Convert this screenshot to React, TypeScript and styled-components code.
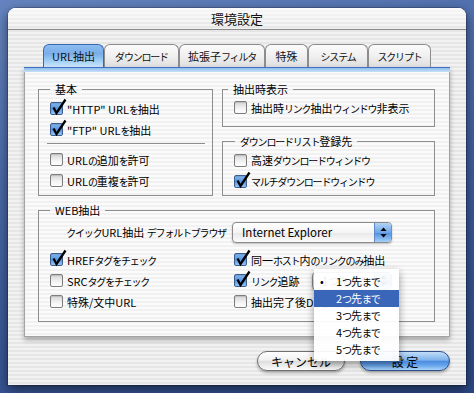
import React from "react";
import styled, { createGlobalStyle } from "styled-components";

const GlobalStyle = createGlobalStyle`
  html, body { margin: 0; padding: 0; }
  body {
    width: 474px;
    height: 393px;
    overflow: hidden;
    background: linear-gradient(165deg, #6584bf 0%, #4a69a7 35%, #3a5897 65%, #2b4884 100%);
    font-family: "Noto Sans CJK JP", sans-serif;
    font-size: 11px;
    color: #000;
  }
`;

const Desktop = styled.div`
  padding: 8px 0 0 8px;
`;

const Window = styled.div`
  width: 458px;
  height: 377px;
  border-radius: 8px 8px 0 0;
  background: repeating-linear-gradient(180deg, #f2f2f2 0 2px, #e6e6e6 2px 4px);
  box-shadow: 0 4px 12px rgba(0, 0, 0, 0.55), 0 0 0 1px rgba(0, 0, 0, 0.2);
  display: flex;
  flex-direction: column;
`;

const TitleBar = styled.div`
  height: 21px;
  border-radius: 8px 8px 0 0;
  border-bottom: 1px solid #8a8a8a;
  background: linear-gradient(rgba(255, 255, 255, 0.75), rgba(255, 255, 255, 0.15)),
    repeating-linear-gradient(180deg, #f0f0f0 0 2px, #e1e1e1 2px 4px);
  text-align: center;
  font-size: 13px;
  line-height: 21px;
  color: #111;
`;

const Body = styled.div`
  padding: 14px 16px 0;
  display: flex;
  flex-direction: column;
`;

const TabRow = styled.div`
  display: flex;
  justify-content: center;
  height: 23px;
`;

const Tab = styled.div<{ $w: number; $on?: boolean }>`
  width: ${(p) => p.$w}px;
  height: 23px;
  box-sizing: border-box;
  border: 1px solid ${(p) => (p.$on ? "#3a68b0" : "#8c8c8c")};
  border-bottom: none;
  border-radius: 6px 6px 0 0;
  background: ${(p) =>
    p.$on
      ? "linear-gradient(#8dbcef 0%, #78ade9 40%, #9ccbf4 70%, #cfe7fd 100%)"
      : "linear-gradient(#fbfbfb 0%, #f0f0f0 50%, #dedede 100%)"};
  display: flex;
  align-items: center;
  justify-content: center;
  font-size: 11px;
  color: #111;
`;

const Panel = styled.div`
  height: 270px;
  box-sizing: border-box;
  border: 1px solid #a2a2a2;
  border-top: none;
  background: repeating-linear-gradient(180deg, #fbfbfb 0 2px, #f1f1f1 2px 4px);
  box-shadow: 0 3px 5px rgba(0, 0, 0, 0.3);
  display: flex;
  flex-direction: column;
`;

const Strip = styled.div`
  height: 5px;
  margin: 0 -1px;
  background: linear-gradient(#3f72c0 0 1px, #8fbcec 1px, #c8e1f9 100%);
`;

const Content = styled.div`
  padding: 11px 0 0 13px;
  display: grid;
  grid-template-columns: 175px 213px;
  column-gap: 9px;
  row-gap: 8px;
  align-items: start;
`;

const Group = styled.fieldset<{ $span?: boolean; $rows?: string; $pad: string }>`
  margin: 0;
  min-width: 0;
  border: 1px solid #8e8e8e;
  padding: ${(p) => p.$pad};
  grid-column: ${(p) => (p.$span ? "1 / 3" : "auto")};
  grid-row: ${(p) => p.$rows ?? "auto"};
  align-self: stretch;
`;

const Legend = styled.legend<{ $offset: number }>`
  margin-left: ${(p) => p.$offset}px;
  padding: 0 5px;
  font-size: 11px;
  line-height: 13px;
`;

const Kana = styled.span`
  font-size: 10px;
  letter-spacing: -1.2px;
`;

const Row = styled.div`
  display: flex;
  align-items: center;
  height: 21px;
  gap: 4px;
  white-space: nowrap;
  min-width: 0;
`;

const Box = styled.span<{ $on: boolean }>`
  position: relative;
  flex: none;
  width: 13px;
  height: 13px;
  box-sizing: border-box;
  border: 1px solid ${(p) => (p.$on ? "#3d5d8f" : "#7d7d7d")};
  border-radius: 2px;
  background: ${(p) =>
    p.$on
      ? "linear-gradient(#86b8ee, #5594e0 50%, #94c6f5 100%)"
      : "linear-gradient(#d4d4d4, #f2f2f2 55%, #ffffff)"};
  box-shadow: inset 0 1px 1px rgba(0, 0, 0, 0.12), 0 1px 0 rgba(255, 255, 255, 0.6);
`;

const Tick = styled.svg`
  position: absolute;
  left: -1px;
  top: -5px;
  width: 17px;
  height: 17px;
  overflow: visible;
`;

const Separator = styled.div`
  height: 1px;
  width: 158px;
  margin: 3px 0 5px -3px;
  background: #8e8e8e;
  box-shadow: 0 1px 0 #fff;
`;

const QuickRow = styled.div`
  display: flex;
  justify-content: flex-end;
  align-items: center;
  gap: 6px;
  height: 24px;
  margin-bottom: 5px;
  white-space: nowrap;
`;

const WebGrid = styled.div`
  display: grid;
  grid-template-columns: 184px minmax(0, 1fr);
`;

const Popup = styled.div<{ $w: number; $h: number }>`
  position: relative;
  flex: none;
  display: flex;
  width: ${(p) => p.$w}px;
  height: ${(p) => p.$h}px;
  box-sizing: border-box;
  border: 1px solid #8a8a8a;
  border-radius: 4px;
  background: linear-gradient(#ffffff, #f4f4f4 50%, #e8e8e8 52%, #fbfbfb);
  box-shadow: 0 1px 2px rgba(0, 0, 0, 0.25);
`;

const PopupPush = styled(Popup)`
  margin-left: auto;
`;

const PopupText = styled.span`
  flex: 1;
  display: flex;
  align-items: center;
  padding-left: 9px;
  font-size: 11.5px;
  white-space: nowrap;
`;

const PopupArrow = styled.span`
  width: 16px;
  flex: none;
  border-left: 1px solid #5f88c4;
  border-radius: 0 3px 3px 0;
  background: linear-gradient(#b2d4f6, #6ea6e8 50%, #4f8fe0 52%, #a6d0f8);
  display: flex;
  align-items: center;
  justify-content: center;
`;

const Menu = styled.div`
  position: absolute;
  left: 1px;
  top: -4px;
  width: 85px;
  padding: 4px 0 3px;
  background: rgba(255, 255, 255, 0.93);
  box-shadow: 0 3px 8px rgba(0, 0, 0, 0.4);
  z-index: 5;
`;

const MenuItem = styled.div<{ $hl?: boolean }>`
  position: relative;
  height: 17px;
  line-height: 17px;
  padding-left: 22px;
  font-size: 11px;
  background: ${(p) => (p.$hl ? "#3a66ba" : "transparent")};
  color: ${(p) => (p.$hl ? "#fff" : "#000")};
`;

const Bullet = styled.span`
  position: absolute;
  left: 6px;
  top: 0;
`;

const ButtonRow = styled.div`
  display: flex;
  justify-content: flex-end;
  gap: 15px;
  margin-top: 14px;
`;

const Button = styled.div<{ $w: number; $default?: boolean }>`
  width: ${(p) => p.$w}px;
  height: 20px;
  box-sizing: border-box;
  border-radius: 10px;
  border: 1px solid ${(p) => (p.$default ? "#2d4f88" : "#707070")};
  background: ${(p) =>
    p.$default
      ? "linear-gradient(#c1dcf8 0%, #7fb2ec 45%, #4b8ce0 52%, #6aa6ec 75%, #a9d3fa 100%)"
      : "linear-gradient(#ffffff 0%, #f1f1f1 45%, #dedede 52%, #ececec 75%, #fbfbfb 100%)"};
  box-shadow: 0 2px 3px rgba(0, 0, 0, 0.3);
  display: flex;
  align-items: center;
  justify-content: center;
  font-size: 12px;
  color: #000;
`;

/* Mac OS X drew kana with proportional (narrow) widths: narrow kana runs */
function JP({ text }: { text: string }) {
  const parts = text.split(/([\u3040-\u30ff]+)/);
  return (
    <>
      {parts.map((p, i) => (i % 2 === 1 ? <Kana key={i}>{p}</Kana> : <React.Fragment key={i}>{p}</React.Fragment>))}
    </>
  );
}

function CheckParts({ on, label }: { on: boolean; label: string }) {
  return (
    <>
      <Box $on={on}>
        {on && (
          <Tick viewBox="0 0 17 17">
            <path d="M3.5 9.5 L6.5 15 L15.5 1.5" fill="none" stroke="#000" strokeWidth="2.3" strokeLinejoin="miter" />
          </Tick>
        )}
      </Box>
      <span>
        <JP text={label} />
      </span>
    </>
  );
}

function Check({ on, label }: { on: boolean; label: string }) {
  return (
    <Row>
      <CheckParts on={on} label={label} />
    </Row>
  );
}

function Arrows() {
  return (
    <svg width="7" height="11" viewBox="0 0 7 11">
      <path d="M3.5 0.5 L6.5 4 L0.5 4 Z" fill="#000" />
      <path d="M3.5 10.5 L6.5 7 L0.5 7 Z" fill="#000" />
    </svg>
  );
}

const tabs = [
  { label: "URL抽出", w: 61 },
  { label: "ダウンロード", w: 75 },
  { label: "拡張子フィルタ", w: 86 },
  { label: "特殊", w: 43 },
  { label: "システム", w: 60 },
  { label: "スクリプト", w: 63 },
];

const depths = ["1つ先まで", "2つ先まで", "3つ先まで", "4つ先まで", "5つ先まで"];

export default function App() {
  return (
    <>
      <GlobalStyle />
      <Desktop>
        <Window>
          <TitleBar>環境設定</TitleBar>
          <Body>
            <TabRow>
              {tabs.map((t, i) => (
                <Tab key={t.label} $w={t.w} $on={i === 0}>
                  <span>
                    <JP text={t.label} />
                  </span>
                </Tab>
              ))}
            </TabRow>
            <Panel>
              <Strip />
              <Content>
                <Group $rows="1 / 3" $pad="2px 11px 4px">
                  <Legend $offset={0}>基本</Legend>
                  <Check on label={'"HTTP" URLを抽出'} />
                  <Check on label={'"FTP" URLを抽出'} />
                  <Separator />
                  <Check on={false} label="URLの追加を許可" />
                  <Check on={false} label="URLの重複を許可" />
                </Group>
                <Group $pad="1px 11px 7px">
                  <Legend $offset={-6}>抽出時表示</Legend>
                  <Check on={false} label="抽出時リンク抽出ウィンドウ非表示" />
                </Group>
                <Group $pad="2px 11px 3px">
                  <Legend $offset={1}>
                    <JP text="ダウンロードリスト登録先" />
                  </Legend>
                  <Check on={false} label="高速ダウンロードウィンドウ" />
                  <Check on label="マルチダウンロードウィンドウ" />
                </Group>
                <Group $span $pad="3px 42px 9px 11px">
                  <Legend $offset={0}>WEB抽出</Legend>
                  <QuickRow>
                    <span>
                      <JP text="クイックURL抽出 デフォルトブラウザ" />
                    </span>
                    <Popup $w={160} $h={21}>
                      <PopupText>Internet Explorer</PopupText>
                      <PopupArrow>
                        <Arrows />
                      </PopupArrow>
                    </Popup>
                  </QuickRow>
                  <WebGrid>
                    <Check on label="HREFタグをチェック" />
                    <Check on label="同一ホスト内のリンクのみ抽出" />
                    <Check on={false} label="SRCタグをチェック" />
                    <Row>
                      <CheckParts on label="リンク追跡" />
                      <PopupPush $w={80} $h={18}>
                        <PopupText>
                          <JP text="1つ先まで" />
                        </PopupText>
                        <PopupArrow>
                          <Arrows />
                        </PopupArrow>
                        <Menu>
                          {depths.map((d, i) => (
                            <MenuItem key={d} $hl={i === 1}>
                              {i === 0 && <Bullet>•</Bullet>}
                              <JP text={d} />
                            </MenuItem>
                          ))}
                        </Menu>
                      </PopupPush>
                    </Row>
                    <Check on={false} label="特殊/文中URL" />
                    <Check on={false} label="抽出完了後DLを開始" />
                  </WebGrid>
                </Group>
              </Content>
            </Panel>
            <ButtonRow>
              <Button $w={88}>キャンセル</Button>
              <Button $w={90} $default>
                設 定
              </Button>
            </ButtonRow>
          </Body>
        </Window>
      </Desktop>
    </>
  );
}
